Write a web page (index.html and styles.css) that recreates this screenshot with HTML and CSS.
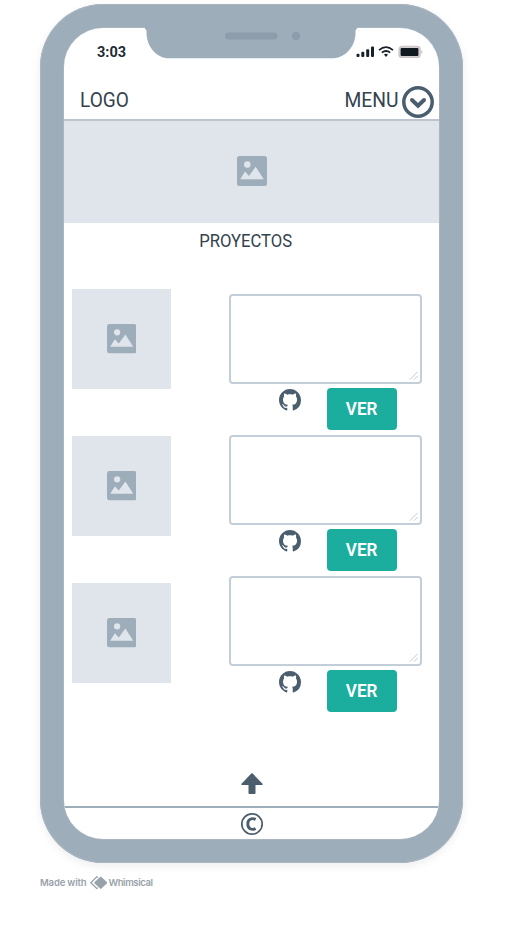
FILE: index.html
```html
<!DOCTYPE html>
<html lang="es">
<head>
<meta charset="utf-8">
<title>Proyectos</title>
<link rel="stylesheet" href="styles.css">
</head>
<body>
<svg class="defs" width="0" height="0" aria-hidden="true">
  <symbol id="image" viewBox="0 0 30 30">
    <path fill="#9eadba" fill-rule="evenodd" d="M2.5 0h25A2.5 2.5 0 0 1 30 2.500v25a2.500 2.500 0 0 1-2.500 2.500h-25A2.500 2.500 0 0 1 0 27.500v-25A2.500 2.500 0 0 1 2.500 0zM10.300 5.300a3.200 3.200 0 1 0 0 6.400a3.200 3.200 0 0 0 0-6.400zM3.300 23.200h23.400L18.700 10.700l-6.700 9.200-4-4.300z"/>
  </symbol>
  <symbol id="github" viewBox="0 0 16 16">
    <path fill="#4b5e6e" d="M8 0C3.580 0 0 3.580 0 8c0 3.540 2.290 6.530 5.470 7.590.4.070.55-.17.55-.38 0-.19-.01-.82-.01-1.490-2.010.37-2.530-.49-2.690-.94-.09-.23-.48-.94-.82-1.130-.28-.15-.68-.52-.01-.53.63-.01 1.080.58 1.230.82.72 1.210 1.870.87 2.330.66.07-.52.28-.87.51-1.070-1.780-.2-3.640-.89-3.640-3.950 0-.87.31-1.590.82-2.150-.08-.2-.36-1.020.08-2.120 0 0 .67-.21 2.200.82.64-.18 1.320-.27 2-.27s1.360.09 2 .27c1.530-1.040 2.200-.82 2.200-.82.44 1.100.16 1.920.08 2.120.51.56.82 1.270.82 2.150 0 3.070-1.870 3.750-3.650 3.950.29.25.54.73.54 1.480 0 1.070-.01 1.930-.01 2.200 0 .21.15.46.55.38A8.010 8.010 0 0 0 16 8c0-4.420-3.580-8-8-8z"/>
  </symbol>
  <symbol id="grip" viewBox="0 0 10 10">
    <path d="M.8 8.700 8.700.8M5 8.700 8.700 5" fill="none" stroke="#c3cbd4" stroke-width="1"/>
  </symbol>
</svg>
<main class="phone">
  <div class="notch">
    <svg width="212" height="32" viewBox="0 -1 212 32">
      <path fill="#9eadba" d="M0 -1H212V1C210.800 1 210.500 2.300 210.500 4.500C210.500 19 200 30.300 187 30.300H24C12 30.300 1.500 19 1.500 4.500C1.500 2.300 1.200 1 0 1z"/>
      <rect x="80" y="4.500" width="52.500" height="7" rx="3.500" fill="#8e9dab"/>
      <circle cx="151" cy="8" r="4.300" fill="#8e9dab"/>
    </svg>
  </div>
  <div class="screen">
    <div class="status">
      <span class="time">3:03</span>
      <svg width="68" height="14" viewBox="0 0 68 14">
        <g fill="#182029">
          <rect x=".500" y="8.700" width="3" height="3.300" rx="1"/><rect x="5.300" y="6.700" width="3" height="5.300" rx="1"/>
          <rect x="10.200" y="4.200" width="3" height="7.800" rx="1"/><rect x="15" y="1.500" width="3" height="10.500" rx="1"/>
        </g>
        <g fill="none" stroke="#182029" stroke-width="1.700">
          <path d="M23 5.200q7-6 14 0"/><path d="M25.800 7.700q4.200-3.400 8.400 0"/>
        </g>
        <path d="M28 9.500q2-1.300 4 0l-2 2.400z" fill="#182029"/>
        <rect x="43" y="1.400" width="21.200" height="11" rx="3" fill="#d6cfd1" stroke="#cbc6ca" stroke-width="1.200"/>
        <rect x="44.600" y="3" width="17.800" height="8" rx="1" fill="#101920"/>
        <path d="M65.300 5v4q1.200-.6 1.200-2t-1.200-2" fill="#c3c0c5"/>
      </svg>
    </div>
    <header class="header">
      <span class="logo">LOGO</span>
      <div class="menu">
        <span class="menu-label">MENU</span>
        <svg width="32" height="32" viewBox="0 0 32 32" fill="none" stroke="#4b5e6e">
          <circle cx="16" cy="16" r="14.200" stroke-width="3.500"/>
          <path d="m10 14 6 5.700 6-5.700" stroke-width="4" stroke-linecap="round"/>
        </svg>
      </div>
    </header>
    <div class="banner"><svg class="picture"><use href="#image"/></svg></div>
    <h1 class="title"><span>PROYECTOS</span></h1>
    <div class="projects">
      <div class="thumbs">
        <div class="thumb"><svg class="picture"><use href="#image"/></svg></div>
        <div class="thumb"><svg class="picture"><use href="#image"/></svg></div>
        <div class="thumb"><svg class="picture"><use href="#image"/></svg></div>
      </div>
      <div class="details">
        <div class="detail">
          <div class="field"><svg class="grip"><use href="#grip"/></svg></div>
          <div class="actions"><svg class="github"><use href="#github"/></svg><button class="view"><span>VER</span></button></div>
        </div>
        <div class="detail">
          <div class="field"><svg class="grip"><use href="#grip"/></svg></div>
          <div class="actions"><svg class="github"><use href="#github"/></svg><button class="view"><span>VER</span></button></div>
        </div>
        <div class="detail">
          <div class="field"><svg class="grip"><use href="#grip"/></svg></div>
          <div class="actions"><svg class="github"><use href="#github"/></svg><button class="view"><span>VER</span></button></div>
        </div>
      </div>
    </div>
    <div class="to-top">
      <svg width="22" height="22" viewBox="0 0 22 22"><path fill="#4b5e6e" d="M10.300.600q.7-.6 1.400 0L21.500 10.800q.6 1.200-.6 1.200H14.500v8.200q0 .8-.8.800h-5.400q-.8 0-.8-.8V12H1.100q-1.200 0-.6-1.200z"/></svg>
    </div>
    <footer class="footer">
      <svg width="24" height="24" viewBox="0 0 24 24" fill="none" stroke="#4b5e6e">
        <circle cx="12" cy="12" r="10.200" stroke-width="1.700"/>
        <path d="M15.600 7.500C12.800 6 7.800 6.200 7.800 12s5 6 7.800 4.500" stroke-width="2.900"/>
      </svg>
    </footer>
  </div>
</main>
<div class="credit">
  <span class="made">Made with</span>
  <svg width="18" height="14" viewBox="0 0 18 14"><path d="M7.800 1.600 6.700.900.900 6.700l5.800 5.800 1.100-.7" fill="none" stroke="#99a2aa" stroke-width="1.300"/><path d="M10.100.9q.7-.6 1.400 0l5.300 5.100q.6.7 0 1.400l-5.300 5.100q-.7.600-1.400 0L4.600 7.400q-.6-.7 0-1.400z" fill="#99a2aa"/></svg>
  <span class="brand">Whimsical</span>
</div>
</body>
</html>
```

FILE: styles.css
```css
* { box-sizing: border-box; }

body {
  margin: 0;
  padding: 4px 0 0 40px;
  background: #fff;
  font-family: Roboto, "Liberation Sans", sans-serif;
  color: #34424e;
}

svg { display: block; flex: none; }
.defs { position: absolute; }

.phone {
  position: relative;
  width: 423px;
  height: 859px;
  padding: 24px;
  border-radius: 63px;
  background: #9eadba;
  box-shadow: inset 0 0 0 1px #a9b6c1, 0 3px 10px rgba(0, 0, 0, .07);
}

.notch {
  position: absolute;
  top: 23px;
  left: 105px;
}

.screen {
  display: flex;
  flex-direction: column;
  width: 375px;
  height: 811px;
  overflow: hidden;
  border-radius: 39px;
  background: #fff;
  box-shadow: 0 0 0 .500px #b3bec8;
}

.status {
  display: flex;
  justify-content: space-between;
  align-items: center;
  height: 46px;
  padding: 1px 15px 0 33px;
}

.time {
  padding-top: 1px;
  font-size: 14.500px;
  font-weight: 700;
  color: #222b34;
}

.header {
  display: flex;
  justify-content: space-between;
  align-items: center;
  height: 47px;
  padding: 7px 5px 0 16px;
  border-bottom: 2px solid #bac5cf;
  font-size: 20.500px;
}

.logo {
  transform: scaleX(.93);
  transform-origin: left;
}

.menu { display: flex; align-items: center; gap: 4px; }
.menu svg { margin-top: 4px; }

.menu-label {
  transform: scaleX(.94);
  transform-origin: right;
}

.banner {
  display: flex;
  align-items: center;
  justify-content: center;
  height: 102px;
  background: #e0e5ec;
}

.picture { width: 29.500px; height: 29.500px; }
.banner .picture { width: 30px; height: 30px; margin-top: -2px; }

.title {
  margin: 0;
  height: 66px;
  padding: 7px 12px 0 0;
  font-size: 18.500px;
  font-weight: 400;
  line-height: 22px;
  text-align: center;
}

.title span { display: inline-block; transform: scaleX(.9); }

.projects {
  display: flex;
  justify-content: space-between;
  padding: 0 17px 0 8px;
}

.thumbs { display: flex; flex-direction: column; gap: 47px; }

.thumb {
  display: flex;
  align-items: center;
  justify-content: center;
  width: 99px;
  height: 100px;
  background: #e0e5ec;
}

.details { display: flex; flex-direction: column; gap: 5px; padding-top: 5px; }
.detail { width: 193px; height: 136px; }

.field {
  display: flex;
  align-items: flex-end;
  justify-content: flex-end;
  height: 90px;
  padding: 1px;
  border: 2px solid #c4ced8;
  border-radius: 4px;
}

.grip { width: 10px; height: 10px; }

.actions {
  display: flex;
  align-items: flex-start;
  gap: 26px;
  padding: 4px 0 0 50px;
}

.github { width: 22px; height: 22px; margin-top: 1px; }

.view {
  width: 70px;
  height: 42px;
  padding: 0 0 2px;
  border: 0;
  border-radius: 4px;
  background: #1bae9f;
  color: #fff;
  font-family: inherit;
  font-size: 18px;
  font-weight: 600;
}

.view span { display: inline-block; transform: scaleX(.95); }

.to-top {
  display: flex;
  flex: 1;
  align-items: flex-end;
  justify-content: center;
  padding-bottom: 11px;
}

.footer {
  display: flex;
  align-items: flex-start;
  justify-content: center;
  height: 33px;
  padding-top: 4px;
  border-top: 2px solid #9eadba;
}

.credit {
  display: flex;
  align-items: center;
  height: 14px;
  margin-top: 13px;
  font-family: Inter, sans-serif;
  font-size: 9.500px;
  font-weight: 600;
  line-height: 14px;
  letter-spacing: -.160px;
  color: #99a2aa;
}

.credit svg { margin: 0 0 0 4px; }
.brand { letter-spacing: -.400px; }
```
